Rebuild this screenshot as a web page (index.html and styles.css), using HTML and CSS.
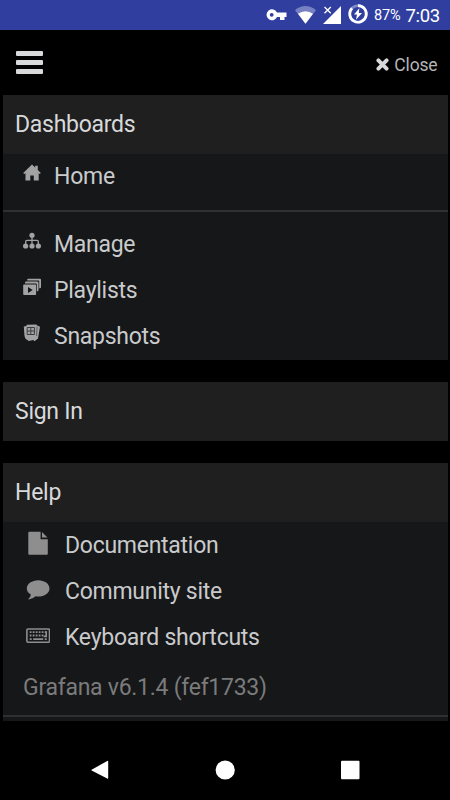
FILE: index.html
```html
<!DOCTYPE html>
<html lang="en">
<head>
<meta charset="utf-8">
<title>Grafana</title>
<link rel="stylesheet" href="styles.css">
</head>
<body>
<header class="status">
  <svg class="status-icons" width="116" height="30" viewBox="0 0 116 30" fill="#fff">
    <path fill-rule="evenodd" d="M12.500 12.500a5.500 5.500 0 1 0 0 4.600h3v3h4.500v-3h2v-4.600zM7.200 12.900a1.900 1.900 0 1 1 0 3.800a1.900 1.900 0 0 1 0-3.800z" transform="translate(-.5)"/>
    <path fill="#7780c2" d="M30 10.200Q40.500 1.800 51 10.200L40.500 23.700z"/>
    <path d="M33 13.800Q40.500 8.500 48 13.800L40.500 23.700z"/>
    <path d="M76 6v18H58z"/>
    <path d="M59.500 7l6.300 6.300M65.800 7l-6.300 6.300" stroke="#303f9f" stroke-width="3.500"/>
    <path d="M59.500 7l6.300 6.300M65.800 7l-6.300 6.300" stroke="#fff" stroke-width="1.300"/>
    <circle cx="93" cy="13.900" r="8.300" fill="none" stroke="#8189c7" stroke-width="2.600"/>
    <path d="M93 5.600A8.300 8.300 0 1 1 87 8.200" fill="none" stroke="#fff" stroke-width="2.700"/>
    <path d="M94.300 8.300l-5.300 6.200h3l-1 5.300 6-6.900h-3.200z"/>
  </svg>
  <span class="battery">87%</span>
  <span class="clock">7:03</span>
</header>
<div class="topbar">
  <div class="burger"><i></i><i></i><i></i></div>
  <div class="close">
    <svg width="13" height="13" viewBox="0 0 13 13"><path d="M2.400 2.400l8.200 8.200M10.600 2.400l-8.200 8.200" stroke="#d8d9da" stroke-width="3.900" stroke-linecap="round"/></svg>
    <span>Close</span>
  </div>
</div>
<nav class="menu">
  <section class="panel">
    <h2>Dashboards</h2>
    <ul class="list">
      <li class="home"><svg class="icon" width="18" height="18" viewBox="0 0 18 18"><path d="M9 .6L12.200 3.500V1.700h2.600v4.200L17.800 9l-1 1-1.100-.7v7.300h-4.900v-5.100H7.300v5.100H2.500V9.300l-1.300.7-1-1z"/></svg><span>Home</span></li>
      <li class="divider"></li>
      <li><svg class="icon" width="18" height="18" viewBox="0 0 18 18"><circle cx="9" cy="3.300" r="2.600"/><circle cx="2.600" cy="14" r="2.600"/><circle cx="9" cy="14" r="2.600"/><circle cx="15.400" cy="14" r="2.600"/><path d="M9 4v9M2.700 13V9.500Q2.700 8.300 4 8.300H14q1.300 0 1.300 1.200V13" fill="none" stroke="#a3a3a4" stroke-width="1.300"/></svg><span>Manage</span></li>
      <li><svg class="icon" width="18" height="18" viewBox="0 0 18 18"><path d="M5.200 .8h11.800q1 0 1 1v7.400q0 1-1 1h-.8V3.500q0-.9-.9-.9H4.200V1.800q0-1 1-1zM3 3.500h11q1.500 0 1.500 1.300v7.400q0 1-1 1h-.7V6.300q0-.9-.9-.9H2V4.500q0-1 1-1z"/><path fill-rule="evenodd" d="M1 6.500h11.300q.8 0 .8.800v9q0 .8-.8.800H1q-.8 0-.8-.8v-9q0-.8.800-.8zM5 8.900v6l4.700-3z"/></svg><span>Playlists</span></li>
      <li><svg class="icon" width="18" height="18" viewBox="0 0 18 18"><path d="M3.500 .7l10-.2.300.8 3.200 1.400-2 11.700-3.500 2.800-1.200-1.200-4.500 1-3.300-2.200L1.500 12 .8 2.500l2.700-.4z"/><path d="M4.200 3.500h7.200v7H4.200zM7.800 3.500v7M4.200 7h7.200" fill="none" stroke="#3c3d3e" stroke-width="1"/><path d="M14 2.500l-.4 9.500" fill="none" stroke="#4a4b4c" stroke-width=".8"/></svg><span>Snapshots</span></li>
    </ul>
  </section>
  <section class="panel">
    <h2>Sign In</h2>
  </section>
  <section class="panel help">
    <h2>Help</h2>
    <ul class="list wide">
      <li><svg class="icon" width="24" height="24" viewBox="0 0 24 24"><path d="M3.300.7h11.300v7.500h7.200v14.500q0 1-1 1H3.300q-1 0-1-1V1.700q0-1 1-1zM16 1l5.500 5.600H16z"/></svg><span>Documentation</span></li>
      <li><svg class="icon" width="24" height="24" viewBox="0 0 24 24"><path d="M12.300 3.200c6.200 0 11.200 3.600 11.200 8.200s-5 8.200-11.200 8.200q-1.500 0-2.800-.3-2.500 2.700-6.600 3.200-.8-.5-.1-1.200 1.900-1.500 2-3.800C2.300 16 .8 13.800.8 11.400c0-4.600 5.200-8.200 11.500-8.200z"/></svg><span>Community site</span></li>
      <li><svg class="icon keyboard" width="24" height="24" viewBox="0 0 24 24"><rect x=".9" y="5" width="22.600" height="13.200" rx="1" fill="none" stroke="#8e8e8e" stroke-width="1.600"/><path d="M3.700 8.100h17M3.700 11.500h14" fill="none" stroke="#8e8e8e" stroke-width="1.800" stroke-dasharray="1.800 1.200"/><path d="M20.200 7.200v5.100h-2.500M3.700 15.200h2M7.200 15.200h10M18.700 15.200h2" fill="none" stroke="#8e8e8e" stroke-width="1.700"/></svg><span>Keyboard shortcuts</span></li>
    </ul>
    <p class="version">Grafana v6.1.4 (fef1733)</p>
  </section>
</nav>
<footer class="navbar">
  <svg width="20" height="20" viewBox="0 0 20 20"><path d="M1.600 9.700L17.200 1q1-.5 1 .6v16.500q0 1-1 .5L1.600 10.400q-.6-.4 0-.7z"/></svg>
  <svg width="20" height="20" viewBox="0 0 20 20"><circle cx="10.200" cy="10" r="9.600"/></svg>
  <svg width="20" height="20" viewBox="0 0 20 20"><rect x="1" y=".8" width="18.500" height="18.500" rx="1"/></svg>
</footer>
</body>
</html>
```
FILE: styles.css
```css
* { box-sizing: border-box; }
body {
  margin: 0;
  width: 450px;
  height: 800px;
  overflow: hidden;
  background: #000;
  color: #c9cacb;
  font-family: Roboto, "Liberation Sans", sans-serif;
  font-size: 23px;
  letter-spacing: -0.27px;
}
svg { display: block; flex: none; }
h2, ul, p { margin: 0; padding: 0; list-style: none; }
.status {
  height: 30px;
  padding-left: 265px;
  display: flex;
  background: #303f9f;
  color: #fff;
  white-space: nowrap;
  letter-spacing: 0;
}
.status-icons { margin-right: -7px; }
.battery { width: 31.500px; font-size: 14.500px; line-height: 32px; letter-spacing: -0.1px; }
.clock { font-size: 18.500px; line-height: 32px; letter-spacing: -0.300px; }
.topbar {
  height: 65px;
  padding: 0 12.500px 0 16px;
  display: flex;
  justify-content: space-between;
}
.burger { padding-top: 21px; display: grid; gap: 4px; align-content: start; }
.burger i { width: 27px; height: 5px; border-radius: 1px; background: #d8d9da; }
.close {
  display: flex;
  align-items: center;
  gap: 5px;
  padding-top: 4px;
  font-size: 17.500px;
  letter-spacing: -0.150px;
  color: #b4b5b6;
}
.menu { padding: 0 2px 0 2.500px; }
.panel { margin-bottom: 22px; background: #161719; }
h2 {
  height: 59px;
  padding-left: 12.500px;
  background: #1f1f20;
  color: #d8d9da;
  font-size: inherit;
  font-weight: 400;
  line-height: 59px;
}
.list { padding-bottom: 1px; }
.list li { height: 46px; display: flex; align-items: center; padding-left: 20.500px; }
.list .home { height: 44px; }
.list .divider { height: 2px; margin: 12px 0 9px; background: #2f3033; }
.list span { margin-top: 1px; }
.icon { fill: #a3a3a4; margin-right: 13px; position: relative; top: -3px; }
.wide .icon { fill: #8e8e8e; margin-right: 15px; top: -2px; }
.wide .keyboard { top: -1px; }
.list.wide li { padding-left: 23.500px; }
.help { border-bottom: 4px solid #161719; }
.version {
  height: 56px;
  padding-left: 20.500px;
  line-height: 53px;
  color: #7b7b7c;
  border-bottom: 2px solid #2f3033;
}
.navbar {
  height: 58px;
  margin-top: -2px;
  padding: 0 90px;
  display: flex;
  justify-content: space-between;
  align-items: center;
  fill: #fff;
}
```
